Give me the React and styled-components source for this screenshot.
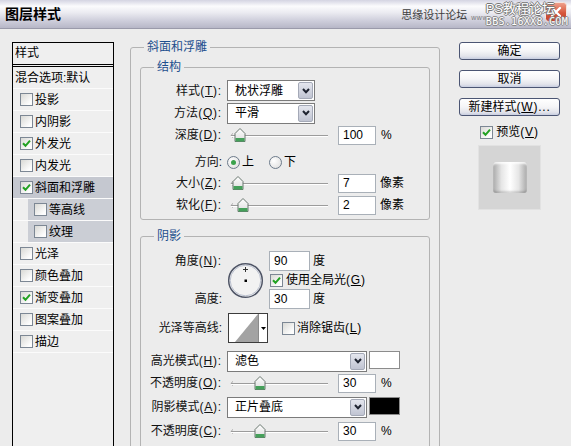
import React from 'react';
import styled, { createGlobalStyle } from 'styled-components';

const GlobalStyle = createGlobalStyle`
  html, body { margin: 0; padding: 0; }
  body {
    background: #ececec;
    font-family: "Liberation Sans", "Noto Sans CJK SC", sans-serif;
    font-size: 12px;
    color: #000;
  }
  * { box-sizing: border-box; }
`;

const layers = [
  { label: '投影' },
  { label: '内阴影' },
  { label: '外发光', checked: true },
  { label: '内发光' },
  { label: '斜面和浮雕', checked: true, selected: true },
  { label: '等高线', sub: true },
  { label: '纹理', sub: true },
  { label: '光泽' },
  { label: '颜色叠加' },
  { label: '渐变叠加', checked: true },
  { label: '图案叠加' },
  { label: '描边' },
];

const CheckBox = ({ checked, gap }) => (
  <StyledBox $gap={gap}>
    {checked && (
      <svg width="9" height="9" viewBox="0 0 9 9">
        <path d="M1 4.2 L3.5 6.8 L8 1.6" fill="none" stroke="#21a121" strokeWidth="2" />
      </svg>
    )}
  </StyledBox>
);

const Lbl = ({ t, k }) => (
  <StyledLabel>
    {t}
    {k ? <Mn>(<u>{k}</u>):</Mn> : ':'}
  </StyledLabel>
);

const Select = ({ w, value }) => (
  <StyledSelect $w={w}>
    <span>{value}</span>
    <StyledDropBtn>
      <svg width="8" height="6" viewBox="0 0 8 6">
        <path d="M1 1 L4 4.2 L7 1" fill="none" stroke="#1e2330" strokeWidth="2" />
      </svg>
    </StyledDropBtn>
  </StyledSelect>
);

const Slider = ({ value }) => (
  <StyledSlider width="100" height="19" viewBox="0 0 100 19">
    <defs>
      <linearGradient id="thumb" x1="0" y1="0" x2="0" y2="1">
        <stop offset="0" stopColor="#ffffff" />
        <stop offset="1" stopColor="#dcdcdc" />
      </linearGradient>
    </defs>
    <path d="M5 7.5 Q1.5 9.5 5 11.5" fill="none" stroke="#a8a8a8" />
    <line x1="3" y1="9.5" x2="100" y2="9.5" stroke="#9c9c9c" />
    <line x1="3" y1="10.5" x2="100" y2="10.5" stroke="#ffffff" />
    <g transform={`translate(${value} 0)`}>
      <polygon points="-5,7.5 0,2.5 5,7.5 5,15.5 -5,15.5" fill="url(#thumb)" stroke="#68766e" />
      <rect x="-4.5" y="12" width="9" height="3.5" fill="#45a05a" />
    </g>
  </StyledSlider>
);

const SliderRow = ({ t, k, value, num, unit, mt }) => (
  <StyledRow $h={22} $mt={mt}>
    <Lbl t={t} k={k} />
    <Slider value={value} />
    <StyledField>{num}</StyledField>
    <StyledUnit>{unit}</StyledUnit>
  </StyledRow>
);

const Dial = () => (
  <StyledDial width="37" height="37" viewBox="0 0 37 37">
    <circle cx="18.5" cy="18.5" r="16.8" fill="#f2f2f2" stroke="#4f5566" strokeWidth="1.5" />
    <circle cx="18.5" cy="18.5" r="15.3" fill="none" stroke="#b9bfce" strokeWidth="1" />
    <line x1="16" y1="7.5" x2="21" y2="7.5" stroke="#333" />
    <line x1="18.5" y1="5" x2="18.5" y2="10" stroke="#333" />
    <rect x="17.5" y="17.5" width="2.5" height="2.5" fill="#000" />
  </StyledDial>
);

const Contour = () => (
  <StyledContour>
    <svg width="29" height="28" viewBox="0 0 29 28">
      <polygon points="6,28 29,0 29,28" fill="#a3a3a3" />
    </svg>
    <StyledContourArrow>
      <svg width="5" height="3" viewBox="0 0 5 3">
        <polygon points="0,0 5,0 2.5,3" fill="#000" />
      </svg>
    </StyledContourArrow>
  </StyledContour>
);

const CloseIcon = () => (
  <StyledCloseSvg width="22" height="20" viewBox="0 0 22 20">
    <defs>
      <linearGradient id="closeRed" x1="0" y1="0" x2="0" y2="1">
        <stop offset="0" stopColor="#f0a490" />
        <stop offset="0.55" stopColor="#d6563b" />
        <stop offset="1" stopColor="#bf432e" />
      </linearGradient>
    </defs>
    <rect x="0.5" y="0.5" width="21" height="19" rx="3" fill="url(#closeRed)" stroke="#f4e4de" />
    <path d="M7 6 L15 14 M15 6 L7 14" stroke="#fff" strokeWidth="2.4" strokeLinecap="round" />
  </StyledCloseSvg>
);

const App = () => {
  return (
    <StyledWindow>
      <GlobalStyle />

      {/* Title bar */}
      <StyledTitleBar>
        <StyledTitle>图层样式</StyledTitle>
        <StyledSite>思缘设计论坛</StyledSite>
        <StyledWww>www.</StyledWww>
        <StyledStamp>
          <StyledStampTop>PS教程论坛</StyledStampTop>
          <StyledStampBottom>BBS.16XX8.COM</StyledStampBottom>
        </StyledStamp>
        <CloseIcon />
      </StyledTitleBar>

      <StyledBody>
        {/* Left list */}
        <StyledList>
          <StyledListHeader>样式</StyledListHeader>
          <StyledListRow $plain>混合选项:默认</StyledListRow>
          {layers.map((layer, index) => (
            <StyledListRow key={index} $sub={layer.sub} $selected={layer.selected}>
              <CheckBox checked={layer.checked} />
              {layer.label}
            </StyledListRow>
          ))}
        </StyledList>

        {/* Middle */}
        <StyledGroup $w={310} $px={9}>
          <StyledLegend $ml={4}>斜面和浮雕</StyledLegend>

          <StyledGroup $mt={6} $pb={3}>
            <StyledLegend $ml={13}>结构</StyledLegend>
            <StyledRow $h={23} $mt={5}>
              <Lbl t="样式" k="T" />
              <Select w={88} value="枕状浮雕" />
            </StyledRow>
            <StyledRow $h={22}>
              <Lbl t="方法" k="Q" />
              <Select w={88} value="平滑" />
            </StyledRow>
            <SliderRow t="深度" k="D" value={12} num="100" unit="%" />
            <StyledRow $h={22} $mt={5}>
              <Lbl t="方向" />
              <StyledRadio $on $ml={5} />上
              <StyledRadio $ml={15} />下
            </StyledRow>
            <StyledRow $h={20}>
              <Lbl t="大小" k="Z" />
              <Slider value={10} />
              <StyledField>7</StyledField>
              <StyledUnit $ml={4}>像素</StyledUnit>
            </StyledRow>
            <StyledRow $h={22} $mt={1}>
              <Lbl t="软化" k="F" />
              <Slider value={15} />
              <StyledField>2</StyledField>
              <StyledUnit $ml={4}>像素</StyledUnit>
            </StyledRow>
          </StyledGroup>

          <StyledGroup $mt={9} $pb={12}>
            <StyledLegend $ml={13}>阴影</StyledLegend>
            <StyledAngleBlock>
              <StyledLabelCol>
                <Lbl t="角度" k="N" />
                <Lbl t="高度" />
              </StyledLabelCol>
              <Dial />
              <StyledValueCol>
                <StyledValueRow $h={20}>
                  <StyledField $w={41} $h={20} $ml={0}>90</StyledField>
                  <StyledUnit $ml={3}>度</StyledUnit>
                </StyledValueRow>
                <StyledValueRow $h={18}>
                  <StyledBoxSpacer />
                  <CheckBox checked gap={3} />
                  使用全局光<Mn>(<u>G</u>)</Mn>
                </StyledValueRow>
                <StyledValueRow $h={20}>
                  <StyledField $w={41} $h={20} $ml={0}>30</StyledField>
                  <StyledUnit $ml={3}>度</StyledUnit>
                </StyledValueRow>
              </StyledValueCol>
            </StyledAngleBlock>

            <StyledRow $h={30} $mt={4}>
              <Lbl t="光泽等高线" />
              <Contour />
              <StyledCheckLabel>
                <CheckBox />
                消除锯齿<Mn>(<u>L</u>)</Mn>
              </StyledCheckLabel>
            </StyledRow>

            <StyledRow $h={22} $mt={7}>
              <Lbl t="高光模式" k="H" />
              <Select w={140} value="滤色" />
              <StyledSwatch $color="#ffffff" />
            </StyledRow>
            <SliderRow t="不透明度" k="O" value={32} num="30" unit="%" />
            <StyledRow $h={22} $mt={2}>
              <Lbl t="阴影模式" k="A" />
              <Select w={140} value="正片叠底" />
              <StyledSwatch $color="#000000" />
            </StyledRow>
            <SliderRow t="不透明度" k="C" value={32} num="30" unit="%" mt={2} />
          </StyledGroup>
        </StyledGroup>

        {/* Right */}
        <StyledButtonCol>
          <StyledButton $mt={2}>确定</StyledButton>
          <StyledButton $mt={10}>取消</StyledButton>
          <StyledButton $mt={10}>新建样式<Mn>(<u>W</u>)...</Mn></StyledButton>
          <StyledPreviewRow>
            <CheckBox checked gap={3} />
            预览<Mn>(<u>V</u>)</Mn>
          </StyledPreviewRow>
          <StyledPreview>
            <StyledPreviewTile />
          </StyledPreview>
        </StyledButtonCol>
      </StyledBody>
    </StyledWindow>
  );
};

const StyledWindow = styled.div`
  width: 571px;
  height: 446px;
  overflow: hidden;
  display: flex;
  flex-direction: column;
  background: #ececec;
`
const StyledTitleBar = styled.div`
  position: relative;
  width: 571px;
  height: 29px;
  flex: none;
  display: flex;
  align-items: center;
  padding: 0 4px 0 5px;
  background: linear-gradient(#d4d4e2 0%, #fbfbfd 22%, #ebebf1 45%, #cdcdda 75%, #b7b7c7 100%);
  border-bottom: 1px solid #9a9aaa;
`
const StyledTitle = styled.div`
  flex: 1;
  font-size: 14px;
  font-weight: 700;
  line-height: 16px;
`
const StyledSite = styled.div`
  margin-top: 2px;
  font-size: 11px;
  line-height: 13px;
  color: #3e3e3e;
`
const StyledWww = styled.div`
  margin: 8px 55px 0 4px;
  font-size: 7px;
  line-height: 8px;
  color: #7a7a7a;
  letter-spacing: 0.5px;
`
const StyledCloseSvg = styled.svg`
  position: relative;
  z-index: 1;
  flex: none;
  align-self: flex-start;
  margin-top: 2px;
`
const StyledStamp = styled.div`
  position: absolute;
  z-index: 2;
  right: 3px;
  top: 1px;
  display: flex;
  flex-direction: column;
  align-items: flex-end;
  pointer-events: none;
`
const StyledStampTop = styled.span`
  margin-right: 13px;
  font-size: 13px;
  line-height: 15px;
  color: #fff;
  text-shadow: 1px 0 0 #777, -1px 0 0 #777, 0 1px 0 #777, 0 -1px 0 #777;
`
const StyledStampBottom = styled.span`
  font-family: "DejaVu Sans Mono", monospace;
  font-size: 10px;
  line-height: 11px;
  letter-spacing: 0.3px;
  color: #fff;
  text-shadow: 1px 0 0 #888, -1px 0 0 #888, 0 1px 0 #888, 0 -1px 0 #888;
`
const StyledBody = styled.div`
  flex: 1;
  min-height: 0;
  display: flex;
  align-items: flex-start;
  padding: 11px 0 0 12px;
  overflow: hidden;
`
const StyledList = styled.div`
  flex: none;
  width: 102px;
  height: 420px;
  margin-top: 2px;
  border: 1px solid #000;
  border-bottom: none;
  background: #efefef;
`
const StyledListHeader = styled.div`
  height: 24px;
  padding-left: 2px;
  line-height: 21px;
  border-bottom: 3px double #000;
`
const StyledListRow = styled.div`
  height: 22px;
  display: flex;
  align-items: center;
  padding-left: ${p => p.$plain ? 2 : p.$sub ? 21 : 7}px;
  border-bottom: 1px solid #fbfbfb;
  white-space: nowrap;
  line-height: 14px;
  background: ${p => p.$selected
    ? '#c5c8d0'
    : p.$sub ? 'linear-gradient(to right, transparent 15px, #cbced5 15px)' : 'transparent'};
`
const StyledBox = styled.span`
  flex: none;
  width: 13px;
  height: 13px;
  margin-right: ${p => p.$gap ?? 2}px;
  border: 1px solid #7c8794;
  background: linear-gradient(135deg, #d9d9d5, #fdfdfd 80%);
  display: inline-flex;
  align-items: center;
  justify-content: center;
`
const StyledBoxSpacer = styled.span`
  width: 1px;
`
const StyledGroup = styled.fieldset`
  flex: none;
  margin: ${p => p.$mt || 0}px 0 0 ${p => p.$w ? 16 : 0}px;
  padding: 0 ${p => p.$px || 0}px ${p => p.$pb || 0}px;
  width: ${p => p.$w ? `${p.$w}px` : 'auto'};
  min-width: 0;
  border: 1px solid #b3b3b3;
  border-radius: 3px;
`
const StyledLegend = styled.legend`
  margin-left: ${p => p.$ml}px;
  padding: 0 3px;
  font-size: 12px;
  line-height: 14px;
  color: #1d4f8e;
`
const StyledRow = styled.div`
  display: flex;
  align-items: center;
  height: ${p => p.$h}px;
  margin-top: ${p => p.$mt || 0}px;
  white-space: nowrap;
  line-height: 14px;
`
const StyledLabel = styled.span`
  flex: none;
  width: 81px;
  text-align: right;
  white-space: nowrap;
  line-height: 14px;
  color: #111;
`
const Mn = styled.span`
  letter-spacing: 0.8px;
  u { text-underline-offset: 1px; }
`
const StyledSelect = styled.div`
  flex: none;
  width: ${p => p.$w}px;
  height: 21px;
  margin-left: 5px;
  padding: 0 1px 0 7px;
  display: flex;
  align-items: center;
  justify-content: space-between;
  background: #fff;
  border: 1px solid #7b7b7b;
`
const StyledDropBtn = styled.span`
  width: 15px;
  height: 17px;
  border: 1px solid #a4a9b7;
  border-radius: 2px;
  background: linear-gradient(#e4e6ee, #c0c4d2);
  display: flex;
  align-items: center;
  justify-content: center;
`
const StyledSlider = styled.svg`
  flex: none;
  margin-left: 6px;
`
const StyledField = styled.span`
  flex: none;
  width: ${p => p.$w || 38}px;
  height: ${p => p.$h || 19}px;
  margin-left: ${p => p.$ml ?? 10}px;
  padding-left: 4px;
  display: flex;
  align-items: center;
  background: #fff;
  border: 1px solid #a9b0b8;
`
const StyledUnit = styled.span`
  margin-left: ${p => p.$ml ?? 5}px;
`
const StyledRadio = styled.span`
  flex: none;
  width: 13px;
  height: 13px;
  margin: 0 2px 0 ${p => p.$ml}px;
  border: 1px solid #6d7b8b;
  border-radius: 50%;
  background: radial-gradient(circle at 35% 35%, #ffffff, #dadada);
  display: inline-flex;
  align-items: center;
  justify-content: center;
  &::after {
    content: '';
    width: 5px;
    height: 5px;
    border-radius: 50%;
    background: ${p => p.$on ? '#3ba24c' : 'transparent'};
  }
`
const StyledAngleBlock = styled.div`
  display: flex;
  height: 58px;
  margin-top: 8px;
`
const StyledLabelCol = styled.div`
  width: 81px;
  display: flex;
  flex-direction: column;
  justify-content: space-between;
  span { line-height: 20px; }
`
const StyledDial = styled.svg`
  flex: none;
  margin: 11px 0 0 5px;
`
const StyledValueCol = styled.div`
  margin-left: 5px;
  display: flex;
  flex-direction: column;
`
const StyledValueRow = styled.div`
  height: ${p => p.$h}px;
  display: flex;
  align-items: center;
  white-space: nowrap;
  line-height: 14px;
`
const StyledContour = styled.div`
  flex: none;
  width: 40px;
  height: 30px;
  margin-left: 6px;
  display: flex;
  background: #fff;
  border: 1px solid #3c3c3c;
`
const StyledContourArrow = styled.span`
  flex: 1;
  border-left: 1px solid #8a8a8a;
  display: flex;
  align-items: center;
  justify-content: center;
`
const StyledCheckLabel = styled.span`
  margin-left: 14px;
  display: flex;
  align-items: center;
`
const StyledSwatch = styled.span`
  flex: none;
  width: 31px;
  height: 18px;
  margin-left: 2px;
  align-self: flex-start;
  margin-top: 1px;
  background: ${p => p.$color};
  border: 1px solid #8c8c8c;
`
const StyledButtonCol = styled.div`
  flex: none;
  width: 101px;
  margin-left: 19px;
  display: flex;
  flex-direction: column;
  align-items: center;
`
const StyledButton = styled.button`
  width: 101px;
  height: 18px;
  margin-top: ${p => p.$mt}px;
  padding: 0;
  font: inherit;
  line-height: 14px;
  color: #000;
  white-space: nowrap;
  border: 1px solid #4b5573;
  border-radius: 3px;
  background: linear-gradient(#ffffff 0%, #f5f5f7 50%, #e3e4eb 82%, #c8cee0 100%);
`
const StyledPreviewRow = styled.div`
  height: 18px;
  margin-top: 7px;
  display: flex;
  align-items: center;
  white-space: nowrap;
  line-height: 14px;
`
const StyledPreview = styled.div`
  width: 63px;
  height: 65px;
  margin-top: 4px;
  display: flex;
  align-items: center;
  justify-content: center;
  background: #d5d5d5;
  border: 1px solid #e2e2e2;
`
const StyledPreviewTile = styled.div`
  width: 34px;
  height: 31px;
  border-radius: 3px;
  background: linear-gradient(to right, #a9a9a9, #e6e6e6 25%, #ffffff 50%, #e6e6e6 75%, #a9a9a9);
  box-shadow: inset 0 2px 2px rgba(255,255,255,0.8), inset 0 -2px 2px rgba(0,0,0,0.15);
`

export default App;
